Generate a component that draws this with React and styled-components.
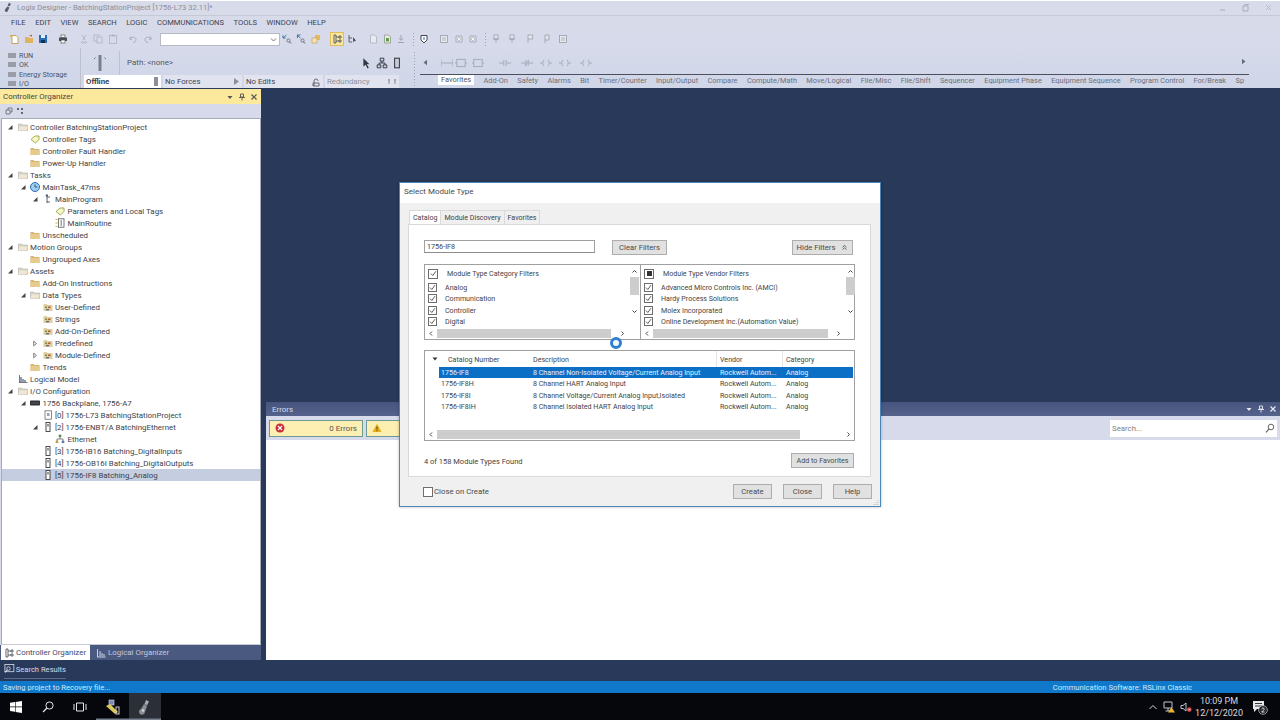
import React from 'react';
import styled, { createGlobalStyle } from 'styled-components';

const GlobalStyle = createGlobalStyle`
  html, body { margin: 0; padding: 0; background: #29395a; }
  body { font-family: Roboto, "Open Sans", sans-serif; font-size: 8px; color: #3c3f48; }
  * { box-sizing: border-box; }
`;

const Page = styled.div`
  position: relative;
  width: 1280px;
  height: 720px;
  overflow: hidden;
  display: flex;
  flex-direction: column;
  background: #29395a;
`;

/* top chrome */
const TitleBar = styled.div`
  height: 15px;
  display: flex;
  align-items: center;
  padding: 0 0 2px 3px;
  gap: 4px;
  background: #d8dbe9;
  border-top: 1.5px solid #fff;
  font-size: 7.6px;
  color: #8b8e9c;
`;
const TitleText = styled.span`
  flex: 1;
  white-space: nowrap;
`;
const WinControls = styled.div`
  display: flex;
  gap: 14px;
  padding-right: 7px;
`;
const MenuBar = styled.div`
  height: 15px;
  display: flex;
  align-items: center;
  gap: 9.5px;
  padding: 0 0 1px 11px;
  background: #d7dbe9;
  border-top: 1px solid #c6c9d6;
  font-size: 7.6px;
  color: #3f4250;
`;
const ToolRow = styled.div`
  height: 18px;
  display: flex;
  align-items: center;
  background: #d6daea;
`;
const ToolSlot = styled.span`
  width: 12px;
  height: 12px;
  flex: none;
  display: flex;
  align-items: center;
  justify-content: center;
  background: ${p => (p.$on ? '#fbe6a0' : 'transparent')};
  outline: ${p => (p.$on ? '1px solid #e2bd5c' : 'none')};
`;
const Combo = styled.div`
  width: 120px;
  height: 13px;
  flex: none;
  display: flex;
  align-items: center;
  justify-content: flex-end;
  padding-right: 2px;
  background: #fff;
  border: 1px solid #b8bbc6;
`;
const StatusBand = styled.div`
  height: 40px;
  display: flex;
  background: linear-gradient(#d6daea, #cfd6e8);
`;
const Lights = styled.div`
  width: 81px;
  flex: none;
  padding: 3px 0 0 8px;
  border-right: 1px solid #bcc0cf;
  display: flex;
  flex-direction: column;
`;
const Light = styled.div`
  height: 9.4px;
  display: flex;
  align-items: center;
  gap: 3px;
  font-size: 7.2px;
  color: #50535f;
  &::before {
    content: '';
    width: 8px;
    height: 5px;
    background: #9a9da8;
  }
`;
const ProcessPanel = styled.div`
  width: 330px;
  flex: none;
  display: flex;
  flex-direction: column;
`;
const PathRow = styled.div`
  height: 27px;
  padding-top: 2px;
  display: flex;
  align-items: center;
  font-size: 8px;
  color: #555866;
`;
const KeySwitch = styled.div`
  width: 39px;
  height: 24px;
  flex: none;
  display: flex;
  align-items: center;
  justify-content: center;
  border-right: 1px solid #bcc0cf;
  margin-right: 7px;
`;
const PathLabel = styled.span`
  flex: 1;
`;
const PathIcons = styled.div`
  display: flex;
  gap: 3px;
  padding-right: 8px;
`;
const ModeRow = styled.div`
  height: 13px;
  display: flex;
  gap: 2px;
  padding-left: 3px;
`;
const ModeCell = styled.div`
  width: ${p => p.$w}px;
  flex: none;
  display: flex;
  align-items: center;
  justify-content: space-between;
  padding: 0 2px 0 2px;
  font-size: 7.8px;
  font-weight: ${p => (p.$bold ? 700 : 400)};
  color: ${p => (p.$dim ? '#8d909d' : '#3f4250')};
  background: ${p => (p.$white ? '#fff' : '#e1e4ef')};
`;
const Grip = styled.div`
  width: 3px;
  flex: none;
  margin: 3px 4px 0 2px;
  background-image: radial-gradient(#9ea2b0 0.7px, transparent 0.8px);
  background-size: 3px 3px;
`;
const Palette = styled.div`
  width: 832px;
  display: flex;
  flex-direction: column;
`;
const PaletteTop = styled.div`
  height: 26px;
  display: flex;
  align-items: center;
  padding: 3px 0 0 2px;
`;
const PaletteEnd = styled.span`
  margin-left: auto;
  margin-right: 5px;
`;
const PaletteTabs = styled.div`
  width: 829px;
  height: 11px;
  display: flex;
  align-items: center;
  gap: 9.4px;
  padding-left: 21px;
  border-top: 1px solid #4c4f5c;
  overflow: hidden;
  font-size: 7.4px;
  color: #6c6f7c;
  white-space: nowrap;
`;
const PaletteTab = styled.span`
  flex: none;
  ${p => p.$active && `
    background: #fff;
    color: #555;
    height: 11px;
    margin-top: -1px;
    padding: 0 3px;
    margin-left: -3px;
    line-height: 11px;
  `}
`;

/* main area */
const Main = styled.div`
  height: 571px;
  margin-top: 1px;
  display: flex;
  gap: 5px;
`;
const Organizer = styled.div`
  width: 261px;
  flex: none;
  display: flex;
  flex-direction: column;
  background: #d6daea;
`;
const PaneHead = styled.div`
  height: 15px;
  display: flex;
  align-items: center;
  justify-content: space-between;
  padding: 0 3px 0 3px;
  background: #fde99b;
  font-size: 7.9px;
  color: #444;
`;
const PaneButtons = styled.div`
  display: flex;
  gap: 4px;
`;
const OrgTools = styled.div`
  height: 14px;
  display: flex;
  align-items: center;
  gap: 3px;
  padding-left: 5px;
`;
const Tree = styled.div`
  flex: 1;
  margin-left: 1px;
  padding-top: 2px;
  background: #fff;
  border: 1px solid #a5a9b8;
  border-bottom-color: #c8cbd6;
`;
const TreeRow = styled.div`
  height: 12px;
  display: flex;
  align-items: center;
  padding-left: ${p => 5 + p.$depth * 12.5}px;
  background: ${p => (p.$sel ? '#c5cde1' : 'transparent')};
  font-size: 7.9px;
  white-space: nowrap;
  color: #3c3f48;
`;
const Twist = styled.span`
  width: 6px;
  height: 12px;
  flex: none;
  margin-right: 4px;
  display: flex;
  align-items: center;
  justify-content: center;
`;
const NodeIcon = styled.span`
  width: 11px;
  height: 11px;
  flex: none;
  margin-right: 2px;
  display: flex;
  align-items: center;
  justify-content: center;
`;
const OrgTabs = styled.div`
  height: 15px;
  display: flex;
  align-items: stretch;
  gap: 3px;
  padding-left: 1px;
  background: #4a5980;
`;
const OrgTab = styled.div`
  display: flex;
  align-items: center;
  gap: 2px;
  padding: 0 4px 0 3px;
  font-size: 7.9px;
  color: ${p => (p.$active ? '#3b4b70' : '#c3c9dc')};
  background: ${p => (p.$active ? '#fff' : 'transparent')};
`;
const RightColumn = styled.div`
  flex: 1;
  display: flex;
  flex-direction: column;
  justify-content: flex-end;
`;
const OutputPane = styled.div`
  height: 258px;
  display: flex;
  flex-direction: column;
`;
const OutputHead = styled(PaneHead)`
  height: 14px;
  padding: 0 3px 0 6px;
  background: linear-gradient(#47557e, #54628c);
  color: #d9deec;
`;
const OutputTools = styled.div`
  height: 24px;
  display: flex;
  align-items: center;
  gap: 3px;
  padding: 0 3px;
  background: #d6daea;
`;
const CountButton = styled.div`
  width: 94px;
  height: 17px;
  flex: none;
  display: flex;
  align-items: center;
  justify-content: space-between;
  padding: 0 5px;
  background: #fdeeb2;
  border: 1px solid #6e9a95;
  font-size: 8px;
  color: #555;
`;
const SearchBox = styled.div`
  width: 167px;
  height: 17px;
  margin-left: auto;
  display: flex;
  align-items: center;
  justify-content: space-between;
  padding: 0 2px;
  background: #fff;
  font-size: 7.8px;
  color: #80838d;
`;
const OutputBody = styled.div`
  flex: 1;
  background: #fff;
`;

/* bottom */
const DockStrip = styled.div`
  height: 21px;
  padding: 0 0 0 4px;
  display: flex;
  align-items: flex-start;
`;
const DockTab = styled.div`
  width: 62px;
  height: 19px;
  display: flex;
  align-items: center;
  gap: 1px;
  font-size: 7.6px;
  white-space: nowrap;
  color: #d5dbe9;
  border-bottom: 1px solid #59688d;
`;
const StatusBar = styled.div`
  height: 12px;
  display: flex;
  align-items: center;
  justify-content: space-between;
  padding: 0 88px 0 3px;
  background: #0f78cb;
  font-size: 7.6px;
  color: #d4e8f8;
`;
const Taskbar = styled.div`
  flex: 1;
  display: flex;
  align-items: stretch;
  background: #05070d;
`;
const TaskSlot = styled.div`
  width: ${p => p.$w || 32}px;
  flex: none;
  display: flex;
  align-items: center;
  justify-content: center;
  background: ${p => (p.$on ? '#2b2f37' : 'transparent')};
  box-shadow: ${p => (p.$mark ? 'inset 0 -1.5px 0 #77808f' : 'none')};
`;
const Tray = styled.div`
  margin-left: auto;
  display: flex;
  align-items: center;
  gap: 5px;
  padding-right: 12px;
`;
const Clock = styled.div`
  display: flex;
  flex-direction: column;
  align-items: center;
  gap: 2px;
  margin: 0 4px 0 -2px;
  font-size: 9px;
  line-height: 10px;
  color: #d6d8dc;
`;

/* dialog */
const Dialog = styled.div`
  position: absolute;
  left: 399px;
  top: 182px;
  width: 482px;
  height: 325px;
  display: flex;
  flex-direction: column;
  background: #f0f0f0;
  border: 1px solid #4c86b8;
  box-shadow: 0 0 3px rgba(0, 0, 0, 0.25);
`;
const DialogTitle = styled.div`
  height: 20px;
  flex: none;
  padding: 0 0 3px 4px;
  display: flex;
  align-items: center;
  background: #fff;
  font-size: 8px;
  color: #4a4a4a;
`;
const DialogBody = styled.div`
  flex: 1;
  padding: 7px 9px 0 8px;
  display: flex;
  flex-direction: column;
`;
const DialogTabs = styled.div`
  height: 14px;
  display: flex;
  padding-left: 1px;
`;
const DialogTab = styled.div`
  display: flex;
  align-items: center;
  padding: 0 3px;
  font-size: 7.1px;
  color: #444;
  background: ${p => (p.$active ? '#fff' : '#efeff0')};
  border: 1px solid #d9d9d9;
  border-bottom: none;
  margin-left: ${p => (p.$active ? 0 : -1)}px;
`;
const TabPanel = styled.div`
  height: 253px;
  display: flex;
  flex-direction: column;
  padding: 15px 0 0 15px;
  background: #fff;
  border: 1px solid #d9d9d9;
`;
const SearchRow = styled.div`
  width: 431px;
  height: 15px;
  display: flex;
  align-items: flex-start;
`;
const TextInput = styled.div`
  width: 171px;
  height: 13px;
  padding-left: 2px;
  display: flex;
  align-items: center;
  border: 1px solid #a0a0a0;
  border-bottom-color: #8d8d8d;
  font-size: 7.2px;
  color: #444;
`;
const Button = styled.div`
  width: ${p => p.$w}px;
  height: 15px;
  flex: none;
  margin-left: ${p => p.$ml || 0}px;
  display: flex;
  align-items: center;
  justify-content: center;
  gap: 6px;
  background: #e1e1e1;
  border: 1px solid #adadad;
  font-size: 7.7px;
  color: #4a4a4a;
`;
const FilterBox = styled.div`
  width: 431px;
  height: 76px;
  margin-top: 9px;
  display: grid;
  grid-template-columns: 215px 216px;
  border: 1px solid #a0a0a0;
`;
const FilterPane = styled.div`
  display: flex;
  flex-direction: column;
  min-width: 0;
  border-left: ${p => (p.$split ? '1px solid #a0a0a0' : 'none')};
`;
const FilterMain = styled.div`
  flex: 1;
  display: flex;
  min-height: 0;
`;
const FilterList = styled.div`
  flex: 1;
  padding-left: 3px;
  font-size: 7.1px;
  color: #444;
`;
const FilterHead = styled.div`
  height: 17px;
  display: flex;
  align-items: center;
  gap: 9px;
`;
const FilterRow = styled.div`
  height: 11.3px;
  display: flex;
  align-items: center;
  gap: 8px;
  white-space: nowrap;
`;
const Check = styled.span`
  width: ${p => p.$s || 9}px;
  height: ${p => p.$s || 9}px;
  flex: none;
  display: flex;
  align-items: center;
  justify-content: center;
  background: #fff;
  border: 1px solid #6d6d6d;
`;
const MixedMark = styled.span`
  width: 5px;
  height: 5px;
  background: #333;
`;
const VScroll = styled.div`
  width: 12px;
  flex: none;
  display: flex;
  flex-direction: column;
  align-items: center;
`;
const VArrow = styled.span`
  height: ${p => p.$h}px;
  display: flex;
  align-items: center;
`;
const VThumb = styled.div`
  width: 9px;
  height: 18px;
  background: #cdcdcd;
`;
const HScroll = styled.div`
  height: 11px;
  flex: none;
  padding-right: ${p => p.$inset || 0}px;
  display: flex;
  align-items: center;
`;
const HArrow = styled.span`
  width: 12px;
  flex: none;
  display: flex;
  justify-content: center;
`;
const HTrack = styled.div`
  flex: 1;
  height: 9px;
`;
const HThumb = styled.div`
  height: 9px;
  background: #cdcdcd;
`;
const TableBox = styled.div`
  width: 431px;
  height: 91px;
  margin-top: 10px;
  display: flex;
  flex-direction: column;
  border: 1px solid #a0a0a0;
  font-size: 7.1px;
  color: #444;
`;
const TableHead = styled.div`
  height: 16px;
  flex: none;
  display: grid;
  grid-template-columns: 108px 183px 66px 1fr;
`;
const HeadCell = styled.div`
  display: flex;
  align-items: center;
  padding-left: ${p => p.$pl || 0}px;
  gap: 10px;
  border-left: ${p => (p.$rule ? '1px solid #e4e4e4' : 'none')};
`;
const TableRows = styled.div`
  flex: 1;
`;
const TableRow = styled.div`
  height: 11.3px;
  margin: 0 1px 0 14px;
  padding-left: 2px;
  display: grid;
  grid-template-columns: 92px 187px 66px 1fr;
  align-items: center;
  white-space: nowrap;
  background: ${p => (p.$sel ? '#0b6fc6' : 'transparent')};
  color: ${p => (p.$sel ? '#e8f2fb' : '#444')};
`;
const FoundRow = styled.div`
  width: 431px;
  margin-top: 12px;
  height: 14px;
  display: flex;
  align-items: center;
  justify-content: space-between;
  padding-right: 1px;
  font-size: 7.5px;
  color: #444;
`;
const FoundText = styled.span`
  padding-top: 2px;
`;
const FavoriteButton = styled(Button)`
  font-size: 7.2px;
`;
const Footer = styled.div`
  margin-top: 7px;
  height: 15px;
  display: flex;
  align-items: center;
  gap: 11px;
  padding-left: 15px;
  margin-right: -1px;
`;
const CloseCheck = styled.label`
  margin-right: auto;
  display: flex;
  align-items: center;
  gap: 1px;
  font-size: 7.8px;
  color: #4a4a4a;
`;
const ResizeGrip = styled.span`
  position: absolute;
  right: 1px;
  bottom: 1px;
  width: 6px;
  height: 6px;
  display: flex;
`;
const Busy = styled.div`
  position: absolute;
  left: 610px;
  top: 337px;
  width: 12px;
  height: 12px;
  border-radius: 50%;
  border: 3px solid #2f80cf;
  background: #f4f8fc;
`;

/* drawings */
const Svg = ({ s = 10, w, h, vb = '0 0 10 10', children }) => (
  <svg width={w || s} height={h || s} viewBox={vb} fill="none">{children}</svg>
);

const Arrow = ({ dir = 'open', color = '#444' }) => {
  if (dir === 'open') return <Svg s={6} vb="0 0 6 6"><path d="M5.5 1v4.5H1z" fill={color} /></Svg>;
  return <Svg s={7} vb="0 0 7 7"><path d="M2 .8 5.2 3.5 2 6.2z" stroke={color} fill="none" strokeWidth=".8" /></Svg>;
};

const Chevron = ({ d }) => {
  const paths = { l: 'M4 1.5 2 3.5 4 5.5', r: 'M2.5 1.5 4.5 3.5 2.5 5.5', u: 'M1.5 4.5 3.5 2.5 5.5 4.5', dn: 'M1.5 2.5 3.5 4.5 5.5 2.5' };
  return <Svg s={7} vb="0 0 7 7"><path d={paths[d]} stroke="#444" strokeWidth="1" /></Svg>;
};

const Tick = () => (
  <Svg s={7} vb="0 0 7 7"><path d="M1 3.6 2.8 5.5 6 1.2" stroke="#4a4a4a" strokeWidth=".9" /></Svg>
);

const NODE = {
  openFolder: (
    <Svg>
      <path d="M.5 2h3l1 1h5v5.5h-9z" fill="#d9d4c8" stroke="#a9a59a" strokeWidth=".5" />
      <path d="M1.5 4.5h8l-1 4h-8z" fill="#efe7d4" />
    </Svg>
  ),
  folder: (
    <Svg>
      <path d="M.5 2h3l1 1h5v6h-9z" fill="#d8b571" />
      <path d="M.5 4h9v5h-9z" fill="#e6cb8f" />
    </Svg>
  ),
  tag: (
    <Svg>
      <path d="M1 5.5 5 2h4v3.5L5.5 9z" fill="#f8f5c6" stroke="#8c9a2e" strokeWidth=".8" />
    </Svg>
  ),
  clock: (
    <Svg>
      <circle cx="5" cy="5" r="4.5" fill="#9fcdf0" stroke="#2a6fb0" />
      <path d="M5 2.5V5h2.3" stroke="#1d4f82" strokeWidth=".9" />
    </Svg>
  ),
  program: (
    <Svg>
      <path d="M4 1v8M4 3h3M4 8h3" stroke="#46546e" strokeWidth=".9" />
      <rect x="2.8" y=".5" width="2" height="2" fill="#46546e" />
    </Svg>
  ),
  routine: (
    <Svg>
      <path d="M.5 1.5h2M.5 5h2M.5 8.5h2" stroke="#c8b13a" />
      <rect x="3.5" y=".8" width="5.5" height="8.4" fill="#fff" stroke="#555" strokeWidth=".8" />
      <path d="M6.2 2v6" stroke="#555" strokeWidth=".8" />
    </Svg>
  ),
  types: (
    <Svg>
      <path d="M.5 2h3l1 1h5v6h-9z" fill="#e2cd9d" />
      <rect x="2" y="4.5" width="2" height="1.6" fill="#7c8a5d" />
      <rect x="5" y="4.5" width="2.5" height="1.6" fill="#a3673d" />
      <rect x="3" y="7" width="3" height="1.4" fill="#66708a" />
    </Svg>
  ),
  logical: (
    <Svg>
      <path d="M1.5 1v8M1.5 8.5h8" stroke="#555" strokeWidth=".8" />
      <path d="M3 3v5M5 5v3M7 6v2" stroke="#3b4b70" strokeWidth="1.1" />
    </Svg>
  ),
  chassis: (
    <Svg>
      <rect y="2.5" width="10" height="5" rx=".8" fill="#2f3136" />
      <path d="M2 4v2M4 4v2M6 4v2M8 4v2" stroke="#777" strokeWidth=".6" />
    </Svg>
  ),
  controller: (
    <Svg>
      <rect x="2" y=".8" width="6.5" height="8.4" fill="#fff" stroke="#6a6a6a" strokeWidth=".8" />
      <rect x="4" y="3" width="2.5" height="3" fill="#9aa0ad" />
    </Svg>
  ),
  module: (
    <Svg>
      <rect x="3" y=".5" width="4" height="9" fill="#fff" stroke="#3a3a3a" strokeWidth=".9" />
      <path d="M5 2v2.5" stroke="#3a3a3a" />
    </Svg>
  ),
  ethernet: (
    <Svg>
      <rect x="3.7" y=".7" width="2.6" height="2.4" fill="#5c8a4a" />
      <rect x=".7" y="6.7" width="2.6" height="2.4" fill="#c0a23e" />
      <rect x="6.7" y="6.7" width="2.6" height="2.4" fill="#5c7ea8" />
      <path d="M5 3v2M2 7V5h6v2" stroke="#555" strokeWidth=".7" />
    </Svg>
  ),
};

const GLYPH = {
  new: <><path d="M3 1.5h4l2 2v6H3z" fill="#fff" stroke="#c08f3a" strokeWidth=".8" /><path d="M2 1v2M1 2h2" stroke="#dba52e" /></>,
  open: <><path d="M1 3h3l1 1h4v5H1z" fill="#e0b45c" /><path d="M5 1.5 8 .8v2z" fill="#d05a28" /></>,
  save: <><rect x="1" y="1" width="8" height="8" fill="#2a6cb4" /><rect x="3" y="1" width="4" height="3" fill="#e5eef7" /><rect x="3" y="6" width="4" height="3" fill="#12315a" /></>,
  print: <><rect x="3" y="1" width="4" height="2.5" fill="#fff" stroke="#444" strokeWidth=".6" /><rect x="1" y="3.5" width="8" height="3.5" fill="#4a4d57" /><rect x="3" y="6" width="4" height="3" fill="#fff" stroke="#444" strokeWidth=".6" /></>,
  cut: <path d="M3 1l3 5M7 1 4 6M3.5 7.5a1 1 0 1 1-.1 0M6.5 7.5a1 1 0 1 1-.1 0" stroke="#aeb2bf" strokeWidth=".8" />,
  copy: <><rect x="1" y="1" width="5" height="6" stroke="#aeb2bf" strokeWidth=".8" /><rect x="4" y="3" width="5" height="6" fill="#d6daea" stroke="#aeb2bf" strokeWidth=".8" /></>,
  paste: <><rect x="1.5" y="1.5" width="7" height="8" stroke="#aeb2bf" strokeWidth=".8" /><rect x="3.5" y=".5" width="3" height="2" fill="#aeb2bf" /></>,
  undo: <path d="M3 2.5 1.5 5 4 5.6M2 4.6C4 2.4 8 3 8 5.5 8 7.5 6.5 8.5 5 8.5" stroke="#a5a9b6" strokeWidth=".9" />,
  redo: <path d="M7 2.5 8.5 5 6 5.6M8 4.6C6 2.4 2 3 2 5.5 2 7.5 3.5 8.5 5 8.5" stroke="#a5a9b6" strokeWidth=".9" />,
  find: <><path d="M4.5 1 1 4M1 1.4V4h2.6" stroke="#2e6aa8" strokeWidth=".9" /><circle cx="6.5" cy="6.5" r="1.6" stroke="#555" strokeWidth=".7" /><path d="M7.5 7.8 9 9.4" stroke="#555" /></>,
  findr: <><path d="M1 1l3.5 3M1.4 4V1H4.5" stroke="#2e6aa8" strokeWidth=".9" /><circle cx="6.5" cy="6.5" r="1.6" stroke="#555" strokeWidth=".7" /><path d="M7.5 7.8 9 9.4" stroke="#555" /></>,
  list: <><rect x="4" y="1" width="5" height="5" fill="#e9b95c" /><rect x="1" y="4" width="5" height="5" fill="#f6e3ac" stroke="#a98f4d" strokeWidth=".5" /></>,
  tree: <path d="M2 1h2v8H2zM4 3h3M4 7h3M7 2h2v2H7zM7 6h2v2H7z" stroke="#3f4654" strokeWidth=".8" />,
  tree2: <><path d="M2 1v7h3M2 4h3" stroke="#3f4654" strokeWidth=".8" /><path d="M6 3l3 4-1.6-.2L6.6 9z" fill="#2b2f38" /></>,
  page: <><path d="M2.5 1h4l2 2v6h-6z" fill="#e8eaf2" stroke="#a5a9b6" strokeWidth=".7" /></>,
  pageg: <><path d="M2.5 1h4l2 2v6h-6z" fill="#e8eaf2" stroke="#869070" strokeWidth=".7" /><path d="M4 4h3v3.5H4z" fill="#59a14a" /></>,
  down: <><path d="M2 8.5h6M5 1v5M3 4.2 5 6.4l2-2.2" stroke="#9a9eab" strokeWidth=".9" /></>,
  shield: <><path d="M2 1.5h6V6L5 9 2 6z" fill="#fff" stroke="#2f3440" strokeWidth=".9" /><path d="M5 3v3" stroke="#2a6cb4" /></>,
  block: <><rect x="1.5" y="1.5" width="7" height="7" fill="#e6e8f0" stroke="#9a9eab" strokeWidth=".8" /><path d="M3 4h4M3 6h4" stroke="#9a9eab" strokeWidth=".7" /></>,
  ring: <><path d="M2 2h6v6H2z" fill="#e6e8f0" stroke="#9a9eab" strokeWidth=".8" /><circle cx="5" cy="5" r="1.6" fill="#fff" stroke="#9a9eab" strokeWidth=".6" /></>,
  flag: <path d="M2 9V1h5L6 3l1 2H2" fill="#e6e8f0" stroke="#9a9eab" strokeWidth=".8" />,
  flag2: <><path d="M3 9V1h4v5H3" fill="#dfe2ec" stroke="#9a9eab" strokeWidth=".8" /></>,
  pin: <><rect x="3" y="1" width="4" height="4" fill="#e6e8f0" stroke="#9a9eab" strokeWidth=".8" /><path d="M5 5v4M2 5h6" stroke="#9a9eab" strokeWidth=".8" /></>,
  arrowTool: <path d="M2 1l5 5-2.2-.1L6.5 9l-1.2.5L4 6.4 2 8z" fill="#33363f" />,
  network: <path d="M3.5 1h3v2.4h-3zM1 6.6h3V9H1zM6 6.6h3V9H6zM5 3.4V5M2.5 6.6V5h5v1.6" stroke="#33363f" strokeWidth=".8" />,
  device: <rect x="3" y="1" width="4" height="8" fill="#c9ccd8" stroke="#3a3d47" strokeWidth=".9" />,
  rung1: <path d="M0 2v6M10 2v6M0 5h10" stroke="#a4a8b6" strokeWidth=".8" />,
  box1: <><path d="M0 5h1.5M8.5 5H10" stroke="#a4a8b6" strokeWidth=".8" /><rect x="1.5" y="2" width="7" height="6" stroke="#a4a8b6" strokeWidth=".8" /></>,
  xic: <path d="M0 5h4M6 5h4M4 2.5v5M6 2.5v5" stroke="#a4a8b6" strokeWidth=".8" />,
  xio: <path d="M0 5h4M6 5h4M4 2.5v5M6 2.5v5M3.4 7.6 6.6 2.4" stroke="#a4a8b6" strokeWidth=".8" />,
  ote: <path d="M0 5h2M8 5h2M3.2 2.4C2 4 2 6 3.2 7.6M6.8 2.4C8 4 8 6 6.8 7.6" stroke="#a4a8b6" strokeWidth=".8" />,
};

const Glyph = ({ name, s = 10 }) => <Svg s={s}>{GLYPH[name]}</Svg>;

// x is the centre of the tool on the page
const MAIN_TOOLS = [
  ['new', 14], ['open', 29], ['save', 43], ['print', 63], ['cut', 84], ['copy', 98], ['paste', 113],
  ['undo', 133], ['redo', 148], ['combo', 220], ['find', 287], ['findr', 301], ['list', 316],
  ['tree', 337, true], ['tree2', 352], ['page', 373], ['pageg', 387], ['down', 401], ['grip', 413],
  ['shield', 424], ['block', 444], ['ring', 459], ['ring', 473], ['grip', 485], ['pin', 496], ['pin', 512],
  ['flag', 531], ['flag2', 547], ['block', 563],
];

const mainToolbar = () => {
  let edge = 0;
  return MAIN_TOOLS.map(([name, x, on], i) => {
    const half = name === 'combo' ? 60 : 6;
    const ml = x - half - edge;
    edge = x + half;
    if (name === 'combo') {
      return (
        <Combo key={i} style={{ marginLeft: ml }}>
          <Svg s={7} vb="0 0 7 7"><path d="M1 2.5 3.5 5 6 2.5" stroke="#777" /></Svg>
        </Combo>
      );
    }
    if (name === 'grip') {
      return <ToolSlot key={i} style={{ marginLeft: ml }}><Grip style={{ height: 14, margin: 0 }} /></ToolSlot>;
    }
    return <ToolSlot key={i} $on={on} style={{ marginLeft: ml }}><Glyph name={name} /></ToolSlot>;
  });
};

const MENU = ['FILE', 'EDIT', 'VIEW', 'SEARCH', 'LOGIC', 'COMMUNICATIONS', 'TOOLS', 'WINDOW', 'HELP'];
const LIGHTS = ['RUN', 'OK', 'Energy Storage', 'I/O'];
const PALETTE_TABS = ['Add-On', 'Safety', 'Alarms', 'Bit', 'Timer/Counter', 'Input/Output', 'Compare', 'Compute/Math',
  'Move/Logical', 'File/Misc', 'File/Shift', 'Sequencer', 'Equipment Phase', 'Equipment Sequence', 'Program Control', 'For/Break', 'Sp'];
const RUNGS = [['rung1', 445], ['box1', 459], ['box1', 476], ['xic', 503], ['xio', 525], ['ote', 544], ['ote', 563], ['ote', 584]];

const TREE = [
  [0, 'open', 'openFolder', 'Controller BatchingStationProject'],
  [1, null, 'tag', 'Controller Tags'],
  [1, null, 'folder', 'Controller Fault Handler'],
  [1, null, 'folder', 'Power-Up Handler'],
  [0, 'open', 'openFolder', 'Tasks'],
  [1, 'open', 'clock', 'MainTask_47ms'],
  [2, 'open', 'program', 'MainProgram'],
  [3, null, 'tag', 'Parameters and Local Tags'],
  [3, null, 'routine', 'MainRoutine'],
  [1, null, 'folder', 'Unscheduled'],
  [0, 'open', 'openFolder', 'Motion Groups'],
  [1, null, 'folder', 'Ungrouped Axes'],
  [0, 'open', 'openFolder', 'Assets'],
  [1, null, 'folder', 'Add-On Instructions'],
  [1, 'open', 'openFolder', 'Data Types'],
  [2, null, 'types', 'User-Defined'],
  [2, null, 'types', 'Strings'],
  [2, null, 'types', 'Add-On-Defined'],
  [2, 'closed', 'types', 'Predefined'],
  [2, 'closed', 'types', 'Module-Defined'],
  [1, null, 'folder', 'Trends'],
  [0, null, 'logical', 'Logical Model'],
  [0, 'open', 'openFolder', 'I/O Configuration'],
  [1, 'open', 'chassis', '1756 Backplane, 1756-A7'],
  [2, null, 'controller', '[0] 1756-L73 BatchingStationProject'],
  [2, 'open', 'module', '[2] 1756-ENBT/A BatchingEthernet'],
  [3, null, 'ethernet', 'Ethernet'],
  [2, null, 'module', '[3] 1756-IB16 Batching_DigitalInputs'],
  [2, null, 'module', '[4] 1756-OB16I Batching_DigitalOutputs'],
  [2, null, 'module', '[5] 1756-IF8 Batching_Analog', true],
];

const CATEGORY_FILTERS = ['Analog', 'Communication', 'Controller', 'Digital'];
const VENDOR_FILTERS = ['Advanced Micro Controls Inc. (AMCI)', 'Hardy Process Solutions', 'Molex Incorporated', 'Online Development Inc.(Automation Value)'];
const MODULES = [
  ['1756-IF8', '8 Channel Non-Isolated Voltage/Current Analog Input'],
  ['1756-IF8H', '8 Channel HART Analog Input'],
  ['1756-IF8I', '8 Channel Voltage/Current Analog Input,Isolated'],
  ['1756-IF8IH', '8 Channel Isolated HART Analog Input'],
];

const PaneControls = ({ color }) => (
  <PaneButtons>
    <Svg s={8} vb="0 0 8 8"><path d="M1.5 3h5L4 6z" fill={color} /></Svg>
    <Svg s={8} vb="0 0 8 8"><path d="M2.5 1h3v3h-3zM1 4.5h6M4 4.5V7.5" stroke={color} strokeWidth=".9" /></Svg>
    <Svg s={8} vb="0 0 8 8"><path d="M1.5 1.5l5 5M6.5 1.5l-5 5" stroke={color} strokeWidth="1.2" /></Svg>
  </PaneButtons>
);

const Scrollbar = ({ thumb, inset }) => (
  <HScroll $inset={inset}>
    <HArrow><Chevron d="l" /></HArrow>
    <HTrack><HThumb style={{ width: thumb }} /></HTrack>
    <HArrow><Chevron d="r" /></HArrow>
  </HScroll>
);

const Filter = ({ title, items, mixed, split, thumb }) => (
  <FilterPane $split={split}>
    <FilterMain>
      <FilterList>
        <FilterHead>
          <Check $s={10}>{mixed ? <MixedMark /> : <Tick />}</Check>
          <span>{title}</span>
        </FilterHead>
        {items.map(label => (
          <FilterRow key={label}><Check><Tick /></Check>{label}</FilterRow>
        ))}
      </FilterList>
      <VScroll>
        <VArrow $h={12}><Chevron d="u" /></VArrow>
        <VThumb />
        <VArrow $h={33}><Chevron d="dn" /></VArrow>
      </VScroll>
    </FilterMain>
    <Scrollbar thumb={thumb} inset={12} />
  </FilterPane>
);

const App = () => (
  <Page>
    <GlobalStyle />
    <TitleBar>
      <Svg s={10}><path d="M6 .8 8 2 6.4 4.6l-1.8-1zM4.4 4.4l2 1.1L5 8.6a1.6 1.6 0 1 1-2.6-1.5z" fill="#5c5f68" /></Svg>
      <TitleText>Logix Designer - BatchingStationProject [1756-L73 32.11]*</TitleText>
      <WinControls>
        <Svg s={9} vb="0 0 9 9"><path d="M2 7h5" stroke="#a9acb9" /></Svg>
        <Svg s={9} vb="0 0 9 9"><path d="M2 3h5v5H2zM3.5 1.5H8" stroke="#a9acb9" /></Svg>
        <Svg s={9} vb="0 0 9 9"><path d="M2 2l5 5M7 2 2 7" stroke="#b7bac6" /></Svg>
      </WinControls>
    </TitleBar>
    <MenuBar>
      {MENU.map(m => <span key={m}>{m}</span>)}
    </MenuBar>
    <ToolRow>{mainToolbar()}</ToolRow>
    <StatusBand>
      <Lights>
        {LIGHTS.map(l => <Light key={l}>{l}</Light>)}
      </Lights>
      <ProcessPanel>
        <PathRow>
          <KeySwitch>
            <Svg w={18} h={18} vb="0 0 18 18"><rect x="7.5" y="1" width="3" height="16" fill="#7c7f8b" /><path d="M3 5l1.5-1.5M15 5l-1.5-1.5" stroke="#777" /></Svg>
          </KeySwitch>
          <PathLabel>Path: &lt;none&gt;</PathLabel>
          <PathIcons>
            <Glyph name="arrowTool" s={12} />
            <Glyph name="network" s={12} />
            <Glyph name="device" s={12} />
          </PathIcons>
        </PathRow>
        <ModeRow>
          <ModeCell $w={77} $white $bold>
            Offline
            <Svg w={6} h={11} vb="0 0 6 11"><rect x="1" y="1" width="4" height="9" fill="#8d909c" /></Svg>
          </ModeCell>
          <ModeCell $w={79}>
            No Forces
            <Svg w={7} h={9} vb="0 0 7 9"><path d="M1 1l5 3.5L1 8z" fill="#8d909c" /></Svg>
          </ModeCell>
          <ModeCell $w={79}>
            No Edits
            <Svg s={10}><path d="M3 9V4a2 2 0 0 1 4 0M2 6h6v3H2z" stroke="#5b5e6a" strokeWidth=".9" /></Svg>
          </ModeCell>
          <ModeCell $w={74} $dim>
            Redundancy
            <Svg s={10}><path d="M2 2v5M8 2v5M1 3h2M7 3h2" stroke="#8d909c" strokeWidth="1.1" /></Svg>
          </ModeCell>
        </ModeRow>
      </ProcessPanel>
      <Grip />
      <Palette>
        <PaletteTop>
          <Svg s={7} vb="0 0 7 7"><path d="M5 .8v5.4L1.5 3.5z" fill="#686b76" /></Svg>
          {RUNGS.map(([name, x], i) => {
            const prev = i === 0 ? 427 : RUNGS[i - 1][1] + 6;
            return <ToolSlot key={i} style={{ marginLeft: x - 6 - prev }}><Glyph name={name} s={12} /></ToolSlot>;
          })}
          <PaletteEnd><Svg s={7} vb="0 0 7 7"><path d="M2 .8v5.4l3.5-2.7z" fill="#686b76" /></Svg></PaletteEnd>
        </PaletteTop>
        <PaletteTabs>
          <PaletteTab $active>Favorites</PaletteTab>
          {PALETTE_TABS.map(t => <PaletteTab key={t}>{t}</PaletteTab>)}
        </PaletteTabs>
      </Palette>
    </StatusBand>
    <Main>
      <Organizer>
        <PaneHead>
          Controller Organizer
          <PaneControls color="#555" />
        </PaneHead>
        <OrgTools>
          <Svg s={8} vb="0 0 8 8"><path d="M1 3h4v4H1zM3 3V1h4v4H5" stroke="#666" strokeWidth=".8" /></Svg>
          <Svg s={8} vb="0 0 8 8"><path d="M1 1h2v2H1zM5 1h2v2H5zM5 5h2v2H5z" fill="#666" /></Svg>
        </OrgTools>
        <Tree>
          {TREE.map(([depth, twist, icon, label, sel]) => (
            <TreeRow key={label} $depth={depth} $sel={sel}>
              <Twist>{twist && <Arrow dir={twist} />}</Twist>
              <NodeIcon>{NODE[icon]}</NodeIcon>
              {label}
            </TreeRow>
          ))}
        </Tree>
        <OrgTabs>
          <OrgTab $active>
            <Glyph name="tree" />
            Controller Organizer
          </OrgTab>
          <OrgTab>
            <Svg s={10}><path d="M1.5 1v8h8M4 3v5M6 5v3M8 6v2" stroke="#e1e5ef" strokeWidth=".9" /></Svg>
            Logical Organizer
          </OrgTab>
        </OrgTabs>
      </Organizer>
      <RightColumn>
        <OutputPane>
          <OutputHead>
            Errors
            <PaneControls color="#e6e9f2" />
          </OutputHead>
          <OutputTools>
            <CountButton>
              <Svg s={10}><circle cx="5" cy="5" r="4.5" fill="#c8303a" /><path d="M3 3l4 4M7 3 3 7" stroke="#fff" strokeWidth="1.2" /></Svg>
              0 Errors
            </CountButton>
            <CountButton>
              <Svg s={10}><path d="M5 .8 9.5 9h-9z" fill="#e5ae1e" /><path d="M5 3.5v3M5 7.2v1" stroke="#4a3a08" strokeWidth=".9" /></Svg>
            </CountButton>
            <SearchBox>
              Search...
              <Svg s={10}><circle cx="6" cy="4" r="2.8" stroke="#555" strokeWidth=".9" /><path d="M4 6 1 9.4" stroke="#555" strokeWidth="1.1" /></Svg>
            </SearchBox>
          </OutputTools>
          <OutputBody />
        </OutputPane>
      </RightColumn>
    </Main>
    <DockStrip>
      <DockTab>
        <Svg s={12} vb="0 0 12 12"><rect x="1" y="1" width="10" height="8" stroke="#c9d0e0" /><circle cx="5" cy="5.5" r="2" stroke="#fff" strokeWidth=".8" /><path d="M3.5 7 1.5 10" stroke="#fff" /></Svg>
        Search Results
      </DockTab>
    </DockStrip>
    <StatusBar>
      <span>Saving project to Recovery file...</span>
      <span>Communication Software: RSLinx Classic</span>
    </StatusBar>
    <Taskbar>
      <TaskSlot>
        <Svg s={12} vb="0 0 12 12"><path d="M0 1.7 5 1v4.6H0zM5.6.9 12 0v5.6H5.6zM0 6.2h5v4.6l-5-.7zM5.6 6.2H12V12l-6.4-.9z" fill="#fff" /></Svg>
      </TaskSlot>
      <TaskSlot>
        <Svg s={12} vb="0 0 12 12"><circle cx="7.5" cy="4.5" r="3.6" stroke="#e6e6e6" /><path d="M5 7 1 11" stroke="#e6e6e6" strokeWidth="1.2" /></Svg>
      </TaskSlot>
      <TaskSlot>
        <Svg w={14} h={10} vb="0 0 14 10"><path d="M3.5 1h7v8h-7zM1 2v6M13 2v6" stroke="#e6e6e6" /></Svg>
      </TaskSlot>
      <TaskSlot $mark $w={33}>
        <Svg s={16} vb="0 0 16 16">
          <rect x="4" y="1" width="5" height="5" fill="#7a88b8" stroke="#dde" strokeWidth=".6" />
          <path d="M1 7l4-2 8 8-3 2z" fill="#d9c95a" />
          <rect x="11" y="8" width="3" height="7" fill="none" stroke="#ccc" />
        </Svg>
      </TaskSlot>
      <TaskSlot $on $mark $w={32}>
        <Svg s={16} vb="0 0 16 16">
          <path d="M9 1l3 1.5-2 4-2.5-1.5z" fill="#a9abb0" />
          <path d="M7 5l3 2-2 6a3 3 0 1 1-4-3z" fill="#8b8d92" />
          <circle cx="6" cy="11.5" r="1.3" fill="#d5d6d9" />
        </Svg>
      </TaskSlot>
      <Tray>
        <Svg s={10}><path d="M1.5 7 5 3.5 8.5 7" stroke="#d6d8dc" /></Svg>
        <Svg s={12} vb="0 0 12 12"><path d="M1 1h8v6H1zM5 7v3M2.5 10H7" stroke="#d6d8dc" strokeWidth=".9" /><path d="M8.5 6 12 11.5H5z" fill="#e9b72f" /></Svg>
        <Svg s={12} vb="0 0 12 12"><path d="M1 4.5h2L6 2v8L3 7.5H1z" stroke="#d6d8dc" strokeWidth=".9" /><circle cx="9.3" cy="8.6" r="2.4" fill="#d23b3b" /><path d="M8.4 7.7l1.8 1.8M10.2 7.7 8.4 9.5" stroke="#fff" strokeWidth=".6" /></Svg>
        <Clock>
          <span>10:09 PM</span>
          <span>12/12/2020</span>
        </Clock>
        <Svg s={16} vb="0 0 16 16">
          <path d="M1 2h11v8H5l-3 3v-3H1z" fill="#e9e9ea" />
          <path d="M3 4.5h7M3 7h7" stroke="#05070d" strokeWidth=".8" />
          <circle cx="11" cy="11" r="4.4" fill="#26282d" stroke="#d6d8dc" strokeWidth=".6" />
          <path d="M9.6 9.8c.4-1 2.6-1 2.7.3.1 1-1.8 1.7-2.7 2.9h2.9" stroke="#fff" strokeWidth=".8" />
        </Svg>
      </Tray>
    </Taskbar>

    <Dialog>
      <DialogTitle>Select Module Type</DialogTitle>
      <DialogBody>
        <DialogTabs>
          <DialogTab $active>Catalog</DialogTab>
          <DialogTab>Module Discovery</DialogTab>
          <DialogTab>Favorites</DialogTab>
        </DialogTabs>
        <TabPanel>
          <SearchRow>
            <TextInput>1756-IF8</TextInput>
            <Button $w={55} $ml={17}>Clear Filters</Button>
            <Button $w={61} $ml={125}>
              Hide Filters
              <Svg s={7} vb="0 0 7 7"><path d="M1.5 3.2 3.5 1.4l2 1.8M1.5 5.6l2-1.8 2 1.8" stroke="#444" strokeWidth=".8" /></Svg>
            </Button>
          </SearchRow>
          <FilterBox>
            <Filter title="Module Type Category Filters" items={CATEGORY_FILTERS} thumb={174} />
            <Filter title="Module Type Vendor Filters" items={VENDOR_FILTERS} mixed split thumb={175} />
          </FilterBox>
          <TableBox>
            <TableHead>
              <HeadCell $pl={7}>
                <Svg s={6} vb="0 0 6 6"><path d="M.5 1.5h5L3 4.5z" fill="#333" /></Svg>
                Catalog Number
              </HeadCell>
              <HeadCell>Description</HeadCell>
              <HeadCell $rule $pl={3}>Vendor</HeadCell>
              <HeadCell $rule $pl={3}>Category</HeadCell>
            </TableHead>
            <TableRows>
              {MODULES.map(([num, desc], i) => (
                <TableRow key={num} $sel={i === 0}>
                  <span>{num}</span>
                  <span>{desc}</span>
                  <span>Rockwell Autom...</span>
                  <span>Analog</span>
                </TableRow>
              ))}
            </TableRows>
            <Scrollbar thumb={363} />
          </TableBox>
          <FoundRow>
            <FoundText>4 of 158 Module Types Found</FoundText>
            <FavoriteButton $w={63}>Add to Favorites</FavoriteButton>
          </FoundRow>
        </TabPanel>
        <Footer>
          <CloseCheck>
            <Check $s={10} />
            Close on Create
          </CloseCheck>
          <Button $w={39}>Create</Button>
          <Button $w={39}>Close</Button>
          <Button $w={39}>Help</Button>
        </Footer>
      </DialogBody>
      <ResizeGrip>
        <Svg s={6} vb="0 0 6 6"><path d="M5 1v.8M3 3v.8M5 3v.8M1 5v.8M3 5v.8M5 5v.8" stroke="#9a9a9a" strokeWidth=".8" /></Svg>
      </ResizeGrip>
    </Dialog>
    <Busy />
  </Page>
);

export default App;
